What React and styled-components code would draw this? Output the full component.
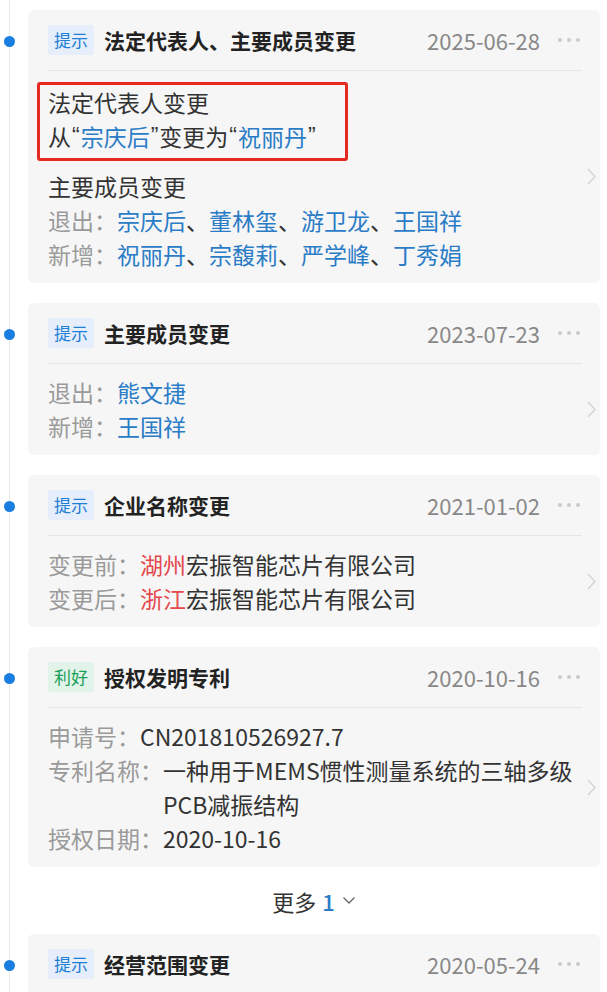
import React from "react";
import styled, { createGlobalStyle } from "styled-components";

const GlobalStyle = createGlobalStyle`
  html, body {
    margin: 0;
    padding: 0;
    background: #fff;
  }
  body {
    font-family: "Noto Sans CJK SC", "Noto Sans", "Liberation Sans", sans-serif;
    color: #333;
  }
`;

const events = [
  {
    tag: "提示",
    title: "法定代表人、主要成员变更",
    date: "2025-06-28",
    kind: "legal",
  },
  {
    tag: "提示",
    title: "主要成员变更",
    date: "2023-07-23",
    rows: [
      { label: "退出：", value: [{ t: "熊文捷", c: "blue" }] },
      { label: "新增：", value: [{ t: "王国祥", c: "blue" }] },
    ],
  },
  {
    tag: "提示",
    title: "企业名称变更",
    date: "2021-01-02",
    rows: [
      {
        label: "变更前：",
        value: [
          { t: "湖州", c: "red" },
          { t: "宏振智能芯片有限公司" },
        ],
      },
      {
        label: "变更后：",
        value: [
          { t: "浙江", c: "red" },
          { t: "宏振智能芯片有限公司" },
        ],
      },
    ],
  },
  {
    tag: "利好",
    good: true,
    title: "授权发明专利",
    date: "2020-10-16",
    more: 1,
    rows: [
      { label: "申请号：", value: [{ t: "CN201810526927.7" }] },
      {
        label: "专利名称：",
        value: [{ t: "一种用于MEMS惯性测量系统的三轴多级" }, { br: true }, { t: "PCB减振结构" }],
      },
      { label: "授权日期：", value: [{ t: "2020-10-16" }] },
    ],
  },
  {
    tag: "提示",
    title: "经营范围变更",
    date: "2020-05-24",
    rows: [],
  },
];

const names = (list) =>
  list.map((n, i) => (
    <React.Fragment key={n}>
      <Name $c="blue">{n}</Name>
      {i < list.length - 1 && "、"}
    </React.Fragment>
  ));

const ChevronRight = () => (
  <ChevronBox>
    <svg width="9" height="17" viewBox="0 0 9 17">
      <path d="M1 1 L8 8.5 L1 16" fill="none" stroke="#d2d2d2" strokeWidth="1.3" />
    </svg>
  </ChevronBox>
);

const Value = ({ parts }) => (
  <ValueText>
    {parts.map((p, i) =>
      p.br ? <br key={i} /> : p.c ? <Name key={i} $c={p.c}>{p.t}</Name> : <span key={i}>{p.t}</span>
    )}
  </ValueText>
);

const App = () => {
  return (
    <>
      <GlobalStyle />
      <Timeline>
        {events.map((e, idx) => (
          <Item key={idx} $flush={!!e.more}>
            <Rail>
              <Dot />
            </Rail>
            <div>
              <Card>
                <Header>
                  <Tag $good={e.good}>{e.tag}</Tag>
                  <Title>{e.title}</Title>
                  <DateText>{e.date}</DateText>
                  <Dots>
                    <i />
                    <i />
                    <i />
                  </Dots>
                </Header>
                {(e.kind === "legal" || e.rows.length > 0) && (
                  <Body>
                    <Content>
                      {e.kind === "legal" ? (
                        <>
                          <Highlight>
                            <Line>法定代表人变更</Line>
                            <Line>
                              从<Quote>“</Quote>
                              <Name $c="blue">宗庆后</Name>
                              <Quote>”</Quote>变更为<Quote>“</Quote>
                              <Name $c="blue">祝丽丹</Name>
                              <Quote>”</Quote>
                            </Line>
                          </Highlight>
                          <Line>主要成员变更</Line>
                          <Line>
                            <Label>退出：</Label>
                            <ValueText>{names(["宗庆后", "董林玺", "游卫龙", "王国祥"])}</ValueText>
                          </Line>
                          <Line>
                            <Label>新增：</Label>
                            <ValueText>{names(["祝丽丹", "宗馥莉", "严学峰", "丁秀娟"])}</ValueText>
                          </Line>
                        </>
                      ) : (
                        e.rows.map((r) => (
                          <Line key={r.label}>
                            <Label>{r.label}</Label>
                            <Value parts={r.value} />
                          </Line>
                        ))
                      )}
                    </Content>
                    <ChevronRight />
                  </Body>
                )}
              </Card>
              {e.more && (
                <MoreRow>
                  更多<MoreCount>{e.more}</MoreCount>
                  <svg width="14" height="9" viewBox="0 0 14 9">
                    <path d="M1.5 1.5 L7 7 L12.5 1.5" fill="none" stroke="#666" strokeWidth="1.3" />
                  </svg>
                </MoreRow>
              )}
            </div>
          </Item>
        ))}
      </Timeline>
    </>
  );
};

const Timeline = styled.div`
  min-height: 992px;
  box-sizing: border-box;
  padding: 10px 7px 0 0;
  background: linear-gradient(#e9e9e9, #e9e9e9) no-repeat 9px 0 / 1px 100%;
`;

const Item = styled.div`
  display: grid;
  grid-template-columns: 28px 1fr;
  padding-bottom: ${(p) => (p.$flush ? "0" : "20px")};
`;

const Rail = styled.div`
  display: flex;
  justify-content: flex-start;
`;

const Dot = styled.span`
  width: 11px;
  height: 11px;
  margin: 26px 0 0 4px;
  border-radius: 50%;
  background: #1a7ee0;
`;

const Card = styled.div`
  background: #f6f6f6;
  border-radius: 6px;
  overflow: hidden;
`;

const Header = styled.div`
  height: 60px;
  margin: 0 18px 0 20px;
  display: flex;
  align-items: center;
  border-bottom: 1px solid #e6e6e6;
`;

const Tag = styled.span`
  height: 30px;
  line-height: 30px;
  padding: 0 6px;
  border-radius: 3px;
  font-size: 17px;
  color: ${(p) => (p.$good ? "#18a058" : "#1f7fd6")};
  background: ${(p) => (p.$good ? "#e2f3e9" : "#e5eefa")};
  margin-right: 10px;
`;

const Title = styled.span`
  font-size: 21px;
  font-weight: 700;
  color: #222;
`;

const DateText = styled.span`
  margin-left: auto;
  font-size: 22px;
  color: #888;
`;

const Dots = styled.span`
  display: flex;
  gap: 5px;
  margin-left: 18px;
  margin-right: 2px;
  i {
    width: 4px;
    height: 4px;
    border-radius: 50%;
    background: #cacaca;
  }
`;

const Body = styled.div`
  display: flex;
  align-items: center;
  padding: 11px 4px 12px 20px;
`;

const Content = styled.div`
  flex: 1;
  min-width: 0;
`;

const ChevronBox = styled.span`
  display: flex;
  flex-shrink: 0;
  margin-left: 8px;
`;

const Highlight = styled.div`
  width: fit-content;
  margin: 0 0 8px -11px;
  padding: 0 28px 5px 8px;
  border: 3px solid #e62a22;
  border-radius: 3px;
`;

const Line = styled.div`
  display: flex;
  font-size: 23px;
  line-height: 34px;
  color: #333;
  white-space: nowrap;
`;

const Quote = styled.span`
  font-family: "Liberation Sans", sans-serif;
  padding: 0 1px;
`;

const Label = styled.span`
  flex-shrink: 0;
  color: #9a9a9a;
`;

const ValueText = styled.span`
  color: #333;
`;

const Name = styled.span`
  color: ${(p) => (p.$c === "red" ? "#e5484d" : "#2a7cc7")};
`;

const MoreRow = styled.div`
  height: 67px;
  display: flex;
  align-items: center;
  justify-content: center;
  font-size: 22px;
  color: #333;
  svg {
    margin-left: 7px;
  }
`;

const MoreCount = styled.span`
  margin-left: 6px;
  color: #2a7cc7;
  font-weight: 500;
`;

export default App;
